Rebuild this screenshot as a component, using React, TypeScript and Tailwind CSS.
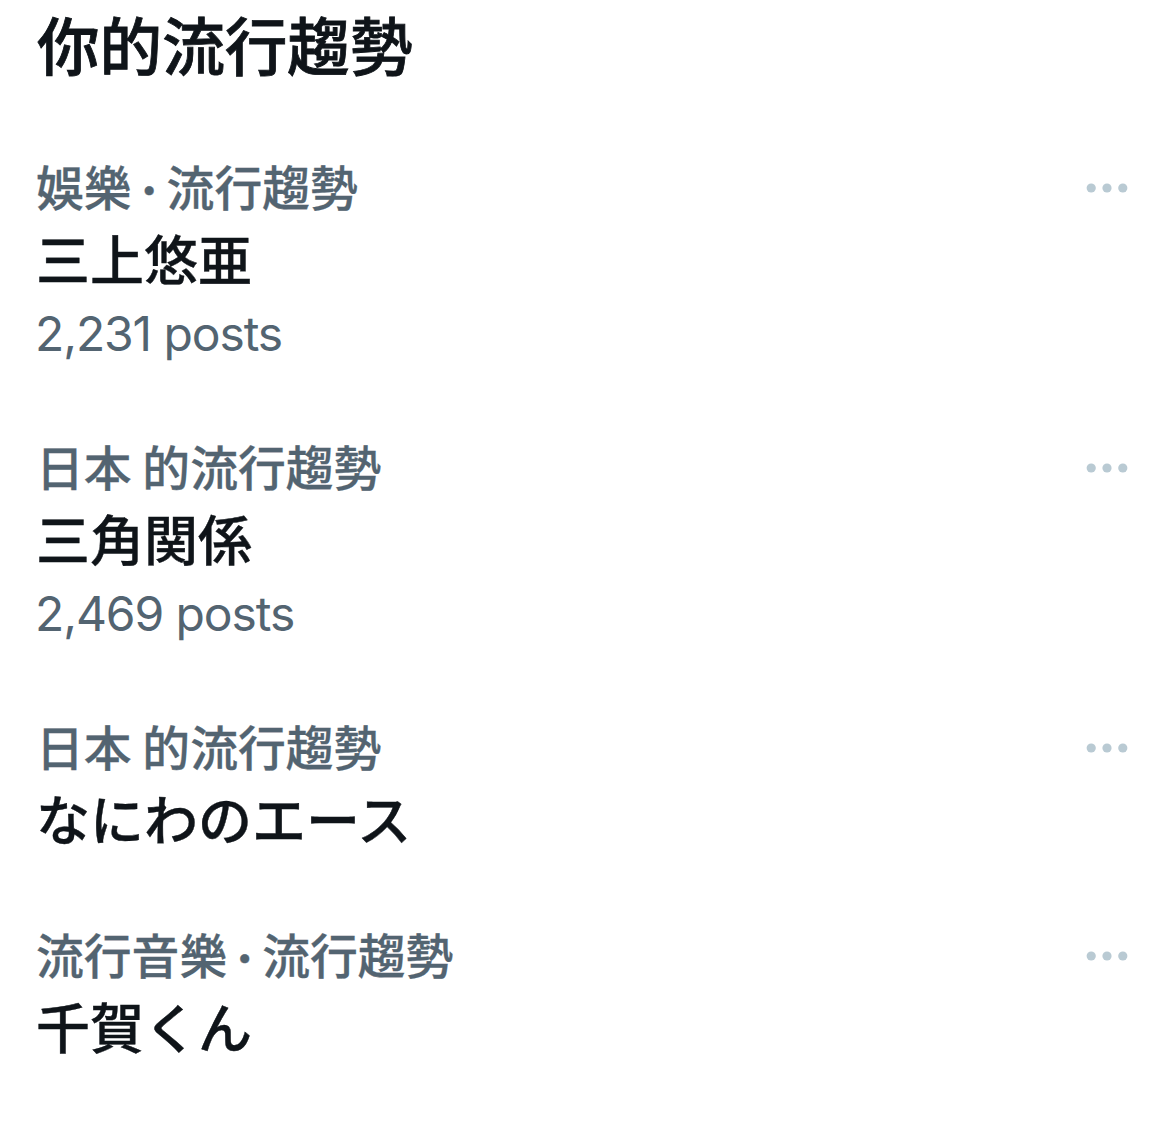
type Trend = {
    category: string;
    topic?: string;
    name: string;
    posts?: string;
};

const trends: Trend[] = [
    { category: "娛樂", topic: "流行趨勢", name: "三上悠亜", posts: "2,231 posts" },
    { category: "日本 的流行趨勢", name: "三角関係", posts: "2,469 posts" },
    { category: "日本 的流行趨勢", name: "なにわのエース" },
    { category: "流行音樂", topic: "流行趨勢", name: "千賀くん" },
];

function MoreIcon() {
    return (
        <svg viewBox="0 0 42 10" className="w-[42px] h-[10px] fill-[#b9cad3]">
            <circle cx="5.2" cy="5" r="4.6" />
            <circle cx="21" cy="5" r="4.6" />
            <circle cx="36.8" cy="5" r="4.6" />
        </svg>
    );
}

function TrendRow({ category, topic, name, posts }: Trend) {
    return (
        <li className="pb-16">
            <div className="flex items-center justify-between h-16">
                <div className="flex pt-[2px] text-[47.8px] leading-[64px] font-medium text-[#536471] [word-spacing:-2px] [-webkit-text-stroke:0.3px_#536471]">
                    <span>{category}</span>
                    {topic && (
                        <>
                            <span className="w-[35px] pt-px text-center font-extrabold">·</span>
                            <span>{topic}</span>
                        </>
                    )}
                </div>
                <button type="button" aria-label="More">
                    <MoreIcon />
                </button>
            </div>
            <p className="h-20 pt-[2px] text-[54px] leading-[80px] font-medium text-[#0f1419] [-webkit-text-stroke:0.4px_#0f1419]">{name}</p>
            {posts && (
                <p className="h-[72px] -ml-px text-[48px] leading-[68px] tracking-[-1.1px] text-[#536471]">{posts}</p>
            )}
        </li>
    );
}

export default function App() {
    return (
        <section className="w-full h-[1121px] overflow-hidden bg-white pl-9 pr-[42px] font-['Inter','Noto_Sans_CJK_JP',sans-serif]">
            <h2 className="h-[156px] pt-[5px] pl-px text-[62.6px] leading-[84px] font-medium text-[#0f1419] [-webkit-text-stroke:0.8px_#0f1419]">你的流行趨勢</h2>
            <ul>
                {trends.map((trend, i) => (
                    <TrendRow key={i} {...trend} />
                ))}
            </ul>
        </section>
    );
}
